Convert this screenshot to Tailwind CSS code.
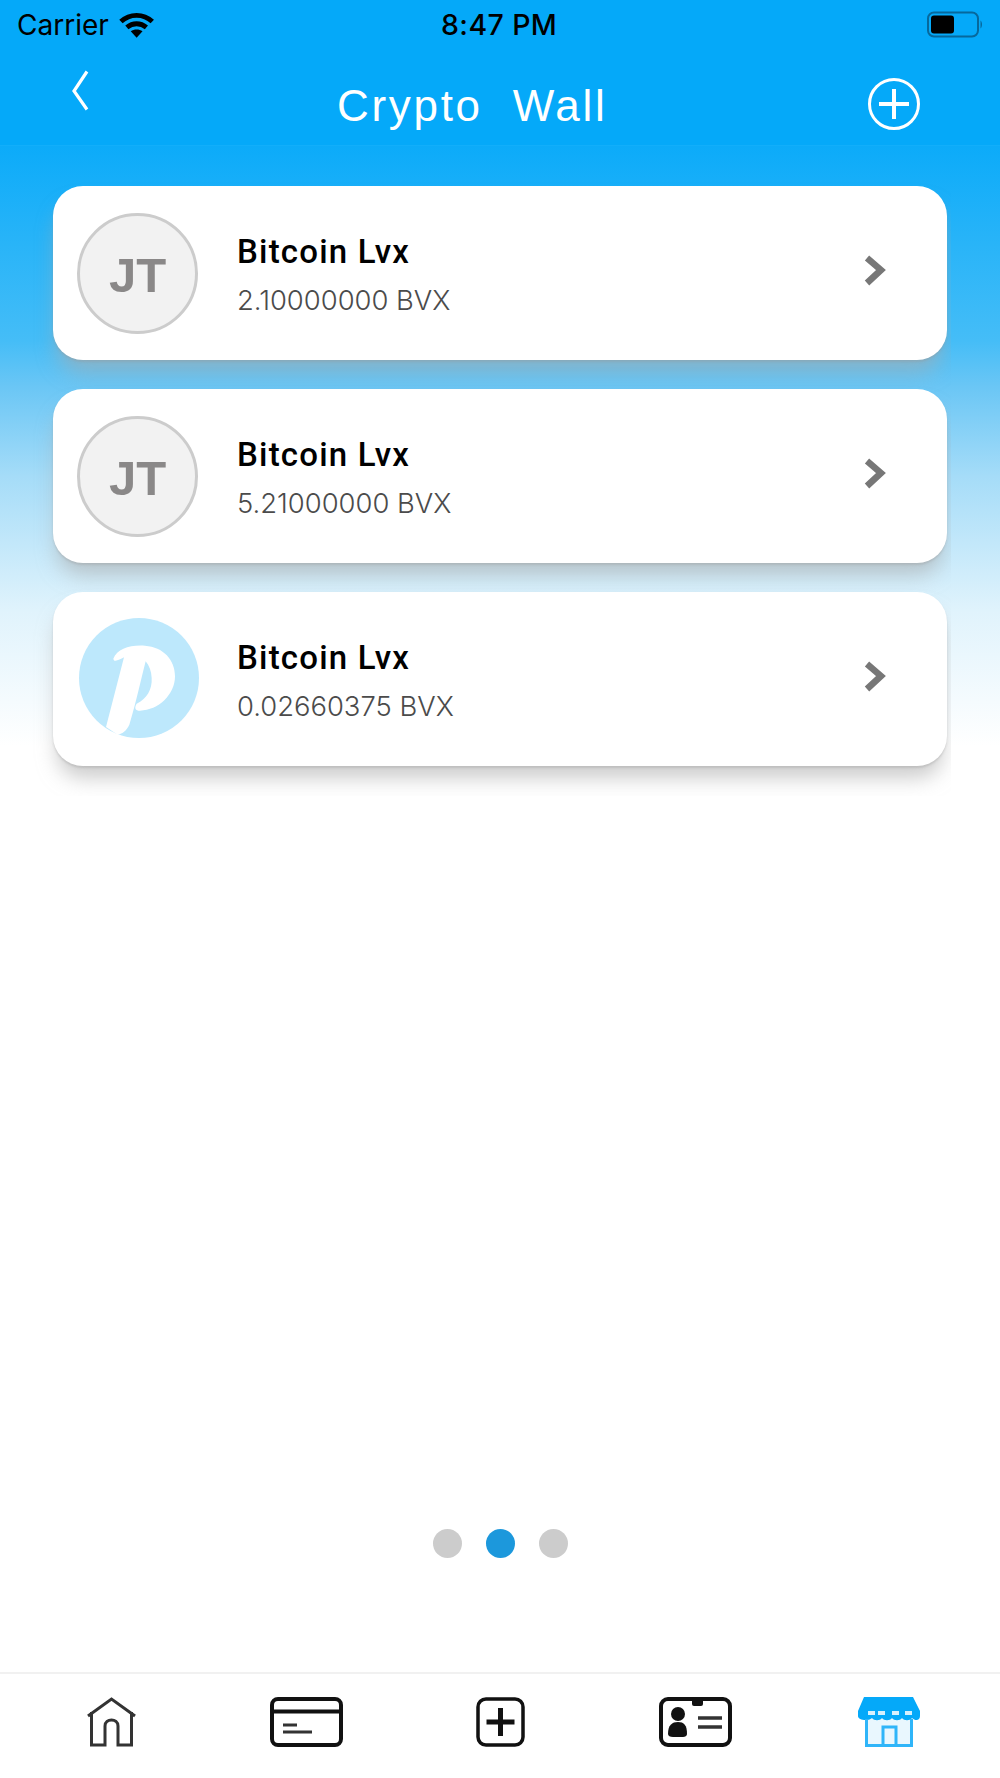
<!DOCTYPE html>
<html lang="en">
<head>
<meta charset="UTF-8">
<meta name="viewport" content="width=device-width, initial-scale=1.0">
<title>Crypto Wall</title>
<script src="https://cdn.jsdelivr.net/npm/@tailwindcss/browser@4"></script>
</head>
<body class="bg-white font-['Liberation_Sans',Arial,sans-serif]">
<div class="flex flex-col w-[1000px] h-[1778px] overflow-hidden">

  <!-- Header -->
  <header class="bg-[#05a9f9] h-[146px] shrink-0 border-b border-[#12aefa]">
    <div class="flex items-center h-[48px] pl-[17px] pr-[17px] pt-[2px] font-['Inter',sans-serif]">
      <span class="text-[28px] text-black leading-none w-[104px]">Carrier</span>
      <svg class="w-[36px] h-[26px]" viewBox="0 0 36 26"><path d="M2 9.5C11 1 25 1 34 9.5" fill="none" stroke="#000" stroke-width="5"/><path d="M8 15.5C14 10.5 22 10.5 28 15.5" fill="none" stroke="#000" stroke-width="5"/><path d="M12 19.5C15.5 17 20.5 17 24 19.5L18 26Z" fill="#000"/></svg>
      <span class="ml-[287px] w-[116px] text-center text-[28.5px] text-black leading-none font-medium tracking-[0.4px] whitespace-nowrap">8:47 PM</span>
      <svg class="ml-[370px] w-[56px] h-[28px] shrink-0" viewBox="0 0 56 28"><rect x="1" y="1.5" width="50" height="24" rx="6" fill="none" stroke="#07689c" stroke-width="2"/><rect x="4" y="4.5" width="23" height="18" rx="3" fill="#000"/><path d="M53.5 9.5C55.5 11 55.5 16 53.5 17.5Z" fill="#07689c"/></svg>
    </div>
    <div class="relative flex items-start h-[97px]">
      <svg class="ml-[71px] mt-[22px] w-[18px] h-[41px]" viewBox="0 0 18 41"><path d="M16 1.5L3 21L16 39.5" fill="none" stroke="#fff" stroke-width="3.2"/></svg>
      <h1 class="ml-[248px] mt-[33px] w-[265px] text-center text-[44px] leading-[50px] text-white tracking-[2.7px] whitespace-pre">Crypto  Wall</h1>
      <svg class="ml-[265px] mt-[29px] w-[54px] h-[54px]" viewBox="0 0 54 54"><circle cx="27" cy="27" r="24.5" fill="none" stroke="#fff" stroke-width="3"/><path d="M27 12V42M12 27H42" stroke="#fff" stroke-width="4"/></svg>
    </div>
  </header>

  <!-- Wallet list -->
  <main class="flex-1 flex flex-col bg-[linear-gradient(#0cabf9_0px,#45bdf7_195px,#6ac6f5_240px,#a5dcf8_330px,#e0f3fc_465px,#ffffff_600px)]">
    <div class="flex flex-col gap-[29px] w-[951px] h-[650px] pl-[53px] pr-[4px] pt-[40px] overflow-hidden shrink-0">

      <div class="flex items-center h-[174px] shrink-0 bg-white rounded-[30px] shadow-[0_2px_2px_rgba(150,150,150,0.3),0_16px_20px_-4px_rgba(170,170,170,0.6)] pl-[24px] pr-[61px]">
        <div class="w-[121px] h-[121px] shrink-0 rounded-full bg-[#f2f2f2] border-[3px] border-[#cccccc] flex items-center justify-center text-[49px] pt-[5px] font-bold text-[#8a8888]">JT</div>
        <div class="ml-[39px] flex-1">
          <p class="mt-[4px] text-[33px] leading-[38px] text-black font-medium tracking-[1.2px] font-['Roboto',sans-serif]">Bitcoin Lvx</p>
          <p class="mt-[12px] text-[27.4px] leading-[34px] text-[#4b4b4b] font-light font-['Inter',sans-serif]">2.10000000 BVX</p>
        </div>
        <svg class="w-[22px] h-[32px] mb-[5px]" viewBox="0 0 22 32"><path d="M3 3L17 15L3 28" fill="none" stroke="#777" stroke-width="6.5"/></svg>
      </div>

      <div class="flex items-center h-[174px] shrink-0 bg-white rounded-[30px] shadow-[0_2px_2px_rgba(150,150,150,0.3),0_16px_20px_-4px_rgba(170,170,170,0.6)] pl-[24px] pr-[61px]">
        <div class="w-[121px] h-[121px] shrink-0 rounded-full bg-[#f2f2f2] border-[3px] border-[#cccccc] flex items-center justify-center text-[49px] pt-[5px] font-bold text-[#8a8888]">JT</div>
        <div class="ml-[39px] flex-1">
          <p class="mt-[4px] text-[33px] leading-[38px] text-black font-medium tracking-[1.2px] font-['Roboto',sans-serif]">Bitcoin Lvx</p>
          <p class="mt-[12px] text-[27.4px] leading-[34px] text-[#4b4b4b] font-light font-['Inter',sans-serif]">5.21000000 BVX</p>
        </div>
        <svg class="w-[22px] h-[32px] mb-[5px]" viewBox="0 0 22 32"><path d="M3 3L17 15L3 28" fill="none" stroke="#777" stroke-width="6.5"/></svg>
      </div>

      <div class="flex items-center h-[174px] shrink-0 bg-white rounded-[30px] shadow-[0_2px_2px_rgba(150,150,150,0.3),0_16px_20px_-4px_rgba(170,170,170,0.6)] pl-[26px] pr-[61px]">
        <svg class="w-[120px] h-[120px] shrink-0 mb-[2px]" viewBox="147 115 360 360"><circle cx="327" cy="295" r="180" fill="#bde8fc"/><path d="M250 237C262 207 300 195 345 198C400 202 435 240 435 290C435 345 385 392 330 393C316 393 312 385 320 372C350 358 367 330 365 295C364 275 358 258 347 245C335 290 318 370 298 435C290 452 278 462 263 465L228 442L282 233C268 240 252 250 250 237Z" fill="#fff"/></svg>
        <div class="ml-[38px] flex-1">
          <p class="mt-[4px] text-[33px] leading-[38px] text-black font-medium tracking-[1.2px] font-['Roboto',sans-serif]">Bitcoin Lvx</p>
          <p class="mt-[12px] text-[27.4px] leading-[34px] text-[#4b4b4b] font-light font-['Inter',sans-serif]">0.02660375 BVX</p>
        </div>
        <svg class="w-[22px] h-[32px] mb-[5px]" viewBox="0 0 22 32"><path d="M3 3L17 15L3 28" fill="none" stroke="#777" stroke-width="6.5"/></svg>
      </div>
    </div>

    <!-- Pager -->
    <div class="flex justify-center gap-[24px] mt-[733px]">
      <span class="w-[29px] h-[29px] rounded-full bg-[#cccccc]"></span>
      <span class="w-[29px] h-[29px] rounded-full bg-[#1c98dc]"></span>
      <span class="w-[29px] h-[29px] rounded-full bg-[#cccccc]"></span>
    </div>
  </main>

  <!-- Bottom nav -->
  <nav class="h-[106px] shrink-0 border-t-2 border-[#f1f1f1] bg-white flex items-start pt-[23px] pl-[87px]">
    <svg class="w-[49px] h-[50px] shrink-0" viewBox="0 0 49 50"><path d="M1 19L24.5 2L48 19" fill="none" stroke="#333" stroke-width="3"/><path d="M4.5 15V48H18V29C18 21 31 21 31 29V48H44.5V15" fill="none" stroke="#333" stroke-width="3"/></svg>
    <svg class="ml-[134px] w-[73px] h-[50px] shrink-0" viewBox="0 0 73 50"><rect x="2" y="2" width="69" height="46" rx="6" fill="none" stroke="#111" stroke-width="4"/><path d="M2 14.5H71" stroke="#111" stroke-width="4"/><path d="M13 28H27M13 35H42" stroke="#333" stroke-width="3"/></svg>
    <svg class="ml-[133px] w-[49px] h-[50px] shrink-0" viewBox="0 0 49 50"><rect x="2" y="2" width="45" height="46" rx="8" fill="none" stroke="#111" stroke-width="3.5"/><path d="M24.5 11V39M10.5 25H38.5" stroke="#111" stroke-width="5"/></svg>
    <svg class="ml-[134px] w-[73px] h-[50px] shrink-0" viewBox="0 0 73 50"><rect x="2" y="2" width="69" height="46" rx="7" fill="none" stroke="#111" stroke-width="4"/><rect x="33" y="0" width="11" height="9" rx="2" fill="#111"/><circle cx="19" cy="17" r="7" fill="#111"/><path d="M9 37C9 28 13 25 19 25C25 25 28 28 28 37C28 39 26 40 24 40H14C11 40 9 39 9 37Z" fill="#111"/><path d="M39 21H63M39 30H63" stroke="#333" stroke-width="3.5"/></svg>
    <svg class="ml-[125px] w-[64px] h-[50px] shrink-0" viewBox="0 0 64 50"><rect x="8" y="18" width="48" height="30" fill="#e9f7fe"/><path d="M7 0H56L63 14V19C63 24 58 24 55 21C53 24 47 24 45 21C43 24 37 24 35 21C33 24 27 24 25 21C23 24 17 24 15 21C13 24 1 24 1 19V14Z" fill="#05a9f9"/><path d="M11 16H18M21 16H28M35 16H42M48 16H55" stroke="#d6f0fd" stroke-width="4"/><path d="M9.5 22V48.5H54.5V22" fill="none" stroke="#2fb5f9" stroke-width="3"/><path d="M26 48V30H39V48" fill="none" stroke="#2fb5f9" stroke-width="3"/></svg>
  </nav>
</div>
</body>
</html>
